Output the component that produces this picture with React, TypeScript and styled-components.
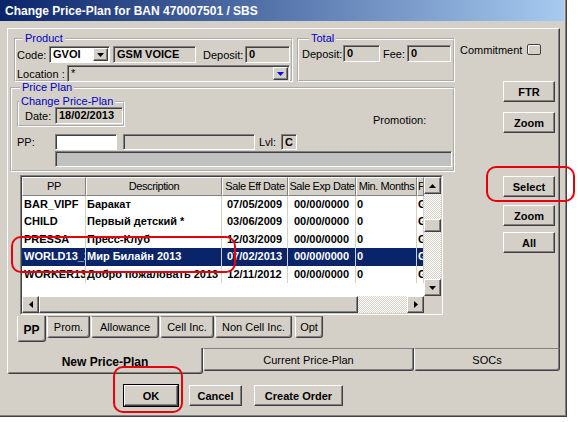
import styled, { createGlobalStyle, css } from 'styled-components'

const GlobalStyle = createGlobalStyle`
  * { box-sizing: border-box; }
  html, body { margin: 0; padding: 0; background: #fff; }
  body {
    font-family: "Liberation Sans", Arial, sans-serif;
    font-size: 11px;
    color: #000;
  }
`

const raised = css`
  border-top: 1px solid #fff;
  border-left: 1px solid #fff;
  border-right: 1px solid #404040;
  border-bottom: 1px solid #404040;
  box-shadow: inset -1px -1px 0 #808080;
`

const sunken = css`
  border-top: 1px solid #808080;
  border-left: 1px solid #808080;
  border-right: 1px solid #fff;
  border-bottom: 1px solid #fff;
  box-shadow: inset 1px 1px 0 #404040;
`

const Screen = styled.div`
  position: relative;
  width: 578px;
  height: 422px;
  overflow: hidden;
  background: #fff;
`

const Window = styled.div`
  width: 567px;
  height: 417px;
  background: #d4d0c8;
  border-right: 1px solid #404040;
  border-bottom: 1px solid #404040;
  box-shadow: inset -1px -1px 0 #808080;
  display: flex;
  flex-direction: column;
`

const TitleBar = styled.div`
  height: 21px;
  margin-right: 2px;
  flex-shrink: 0;
  background: linear-gradient(90deg, #0a246a 0%, #a6caf0 100%);
  color: #fff;
  font-weight: 700;
  font-size: 12px;
  display: flex;
  align-items: center;
  padding-left: 5px;
`

const Body = styled.div`
  display: flex;
  flex-direction: column;
  padding: 7px 0 0 7px;
`

const Page = styled.div`
  width: 553px;
  height: 320px;
  display: flex;
  border-top: 1px solid #fff;
  border-left: 1px solid #fff;
  border-right: 1px solid #404040;
  box-shadow: inset -1px 0 0 #808080;
`

const LeftCol = styled.div`
  margin-left: 2px;
  width: 445px;
  display: flex;
  flex-direction: column;
`

const RightCol = styled.div`
  margin-left: 3px;
  width: 98px;
  display: flex;
  flex-direction: column;
`

const TopRow = styled.div`
  display: flex;
  margin-top: 3px;
`

const Group = styled.fieldset<{ $w: number; $h: number; $ml?: number; $mt?: number }>`
  margin: ${p => p.$mt ?? 0}px 0 0 ${p => p.$ml ?? 0}px;
  padding: 0;
  min-width: 0;
  width: ${p => p.$w}px;
  height: ${p => p.$h}px;
  border: 2px groove #fff;
  flex-shrink: 0;
`

const Legend = styled.legend<{ $ml?: number }>`
  margin-left: ${p => p.$ml ?? 0}px;
  padding: 0 2px;
  color: #0000c0;
  font-size: 11px;
  line-height: 13px;
`

const FieldRow = styled.div<{ $mt?: number; $pl?: number; $h?: number }>`
  display: flex;
  align-items: center;
  height: ${p => p.$h ?? 17}px;
  margin-top: ${p => p.$mt ?? 0}px;
  padding-left: ${p => p.$pl ?? 0}px;
`

const Label = styled.span<{ $w?: number; $ml?: number }>`
  flex-shrink: 0;
  white-space: nowrap;
  ${p => p.$w !== undefined && `width: ${p.$w}px;`}
  margin-left: ${p => p.$ml ?? 0}px;
`

const Field = styled.div<{ $w: number; $ml?: number; $tone?: 'white' | 'gray' | 'dark'; $bold?: boolean; $h?: number }>`
  flex-shrink: 0;
  width: ${p => p.$w}px;
  height: ${p => p.$h ?? 17}px;
  margin-left: ${p => p.$ml ?? 0}px;
  background: ${p => (p.$tone === 'white' ? '#fff' : p.$tone === 'dark' ? '#c0c0c0' : '#d4d0c8')};
  ${sunken}
  font-weight: ${p => (p.$bold ? 700 : 400)};
  padding: 0 2px 0 3px;
  line-height: 15px;
  overflow: hidden;
  white-space: nowrap;
`

const DropField = styled(Field)`
  display: flex;
  align-items: center;
  justify-content: space-between;
  padding-right: 1px;
`

const DropBtn = styled.div`
  width: 15px;
  height: 13px;
  background: #d4d0c8;
  ${raised}
  display: flex;
  align-items: center;
  justify-content: center;
  flex-shrink: 0;
`

const Promotion = styled.span`
  margin-left: 248px;
  align-self: flex-end;
  line-height: 13px;
`

const Commit = styled.div`
  display: flex;
  align-items: center;
  height: 13px;
  margin-top: 14px;
  padding-left: 2px;
`

const CheckBox = styled.div`
  width: 14px;
  height: 11px;
  margin-left: 9px;
  border: 1px solid #404040;
  border-radius: 2px;
  background: #d4d0c8;
  box-shadow: inset 1px 1px 0 #fff;
`

const Button = styled.div<{ $w?: number; $mt?: number; $ml?: number; $default?: boolean }>`
  flex-shrink: 0;
  width: ${p => p.$w ?? 52}px;
  height: 21px;
  margin-top: ${p => p.$mt ?? 0}px;
  margin-left: ${p => p.$ml ?? 45}px;
  background: #d4d0c8;
  ${raised}
  ${p => p.$default && `outline: 1px solid #000;`}
  display: flex;
  align-items: center;
  justify-content: center;
  font-weight: 700;
  font-size: 11px;
`

const GridFrame = styled.div`
  margin: 3px 0 0 10px;
  width: 423px;
  height: 140px;
  border-top: 1px solid #808080;
  border-left: 1px solid #808080;
  border-right: 1px solid #fff;
  border-bottom: 1px solid #fff;
`

const Grid = styled.div`
  width: 100%;
  height: 100%;
  border-top: 1px solid #404040;
  border-left: 1px solid #404040;
  border-right: 1px solid #d4d0c8;
  border-bottom: 1px solid #d4d0c8;
  display: flex;
  flex-direction: column;
  background: #fff;
`

const GridMain = styled.div`
  display: flex;
  height: 119px;
`

const Table = styled.div`
  width: 402px;
  display: flex;
  flex-direction: column;
  overflow: hidden;
`

const HeadRow = styled.div`
  display: flex;
  height: 19px;
  flex-shrink: 0;
`

const HeadCell = styled.div<{ $w: number; $align: string }>`
  width: ${p => p.$w}px;
  flex-shrink: 0;
  background: #d4d0c8;
  border-top: 1px solid #fff;
  border-left: 1px solid #fff;
  border-right: 1px solid #808080;
  border-bottom: 1px solid #808080;
  text-align: ${p => p.$align};
  line-height: 17px;
  letter-spacing: -0.4px;
  white-space: nowrap;
  overflow: hidden;
  padding: 0;
`

const Row = styled.div<{ $sel?: boolean }>`
  display: flex;
  height: 17.4px;
  flex-shrink: 0;
  background: ${p => (p.$sel ? '#0a246a' : '#fff')};
  color: ${p => (p.$sel ? '#fff' : '#000')};
  font-weight: 700;
`

const Cell = styled.div<{ $w: number; $align: string; $pl: number }>`
  width: ${p => p.$w}px;
  flex-shrink: 0;
  text-align: ${p => p.$align};
  padding: 0 1px 0 ${p => p.$pl}px;
  border-right: 1px solid #d4d0c8;
  line-height: 17px;
  white-space: nowrap;
  overflow: hidden;
`

const dither = css`
  background-color: #fff;
  background-image: conic-gradient(#d4d0c8 25%, #fff 0 50%, #d4d0c8 0 75%, #fff 0);
  background-size: 2px 2px;
`

const VScroll = styled.div`
  width: 17px;
  display: flex;
  flex-direction: column;
  ${dither}
`

const HScroll = styled.div`
  display: flex;
  height: 17px;
`

const HTrack = styled.div`
  display: flex;
  width: 402px;
  ${dither}
`

const ScrollBtn = styled.div`
  width: 17px;
  height: 17px;
  flex-shrink: 0;
  background: #d4d0c8;
  ${raised}
  display: flex;
  align-items: center;
  justify-content: center;
`

const Thumb = styled.div<{ $w: number; $h: number; $mt?: number }>`
  width: ${p => p.$w}px;
  height: ${p => p.$h}px;
  margin-top: ${p => p.$mt ?? 0}px;
  flex-shrink: 0;
  background: #d4d0c8;
  ${raised}
`

const VSpacer = styled.div`
  flex: 1;
`

const Corner = styled.div`
  width: 17px;
  height: 17px;
  background: #d4d0c8;
`

const SubTabs = styled.div`
  display: flex;
  align-items: flex-start;
  margin: 1px 0 0 7px;
`

const SubTab = styled.div<{ $w: number; $active?: boolean; $ml?: number }>`
  width: ${p => p.$w}px;
  height: ${p => (p.$active ? 26 : 22)}px;
  margin-left: ${p => p.$ml ?? 1}px;
  background: #d4d0c8;
  border-top: ${p => (p.$active ? 'none' : '1px solid #808080')};
  border-left: 1px solid #fff;
  border-right: 1px solid #404040;
  border-bottom: 1px solid #404040;
  box-shadow: inset -1px -1px 0 #808080;
  border-radius: 0 0 3px 3px;
  display: flex;
  align-items: center;
  justify-content: center;
  font-weight: ${p => (p.$active ? 700 : 400)};
  font-size: ${p => (p.$active ? 12 : 11)}px;
  padding-top: ${p => (p.$active ? 3 : 0)}px;
`

const MainTabs = styled.div`
  display: flex;
  align-items: flex-start;
`

const MainTab = styled.div<{ $w: number; $active?: boolean }>`
  width: ${p => p.$w}px;
  height: ${p => (p.$active ? 26 : 23)}px;
  background: #d4d0c8;
  border-top: ${p => (p.$active ? 'none' : '1px solid #808080')};
  border-left: 1px solid #fff;
  border-right: 1px solid #404040;
  border-bottom: 1px solid #404040;
  box-shadow: inset -1px -1px 0 #808080;
  border-radius: 0 0 3px 3px;
  display: flex;
  align-items: center;
  justify-content: center;
  font-weight: ${p => (p.$active ? 700 : 400)};
  font-size: ${p => (p.$active ? 12 : 11)}px;
  padding-top: ${p => (p.$active ? 3 : 0)}px;
`

const ButtonRow = styled.div`
  display: flex;
  margin-top: 11px;
`

const Mark = styled.div<{ $x: number; $y: number; $w: number; $h: number }>`
  position: absolute;
  left: ${p => p.$x}px;
  top: ${p => p.$y}px;
  width: ${p => p.$w}px;
  height: ${p => p.$h}px;
  border: 2px solid #e8000b;
  border-radius: 10px;
  pointer-events: none;
`

const Arrow = ({ dir, color = '#000' }: { dir: 'up' | 'down' | 'left' | 'right'; color?: string }) => {
  const vertical = dir === 'up' || dir === 'down'
  const pts = {
    up: '0,4 3.5,0 7,4',
    down: '0,0 7,0 3.5,4',
    left: '4,0 4,7 0,3.5',
    right: '0,0 0,7 4,3.5',
  }[dir]
  return (
    <svg width={vertical ? 7 : 4} height={vertical ? 4 : 7} viewBox={vertical ? '0 0 7 4' : '0 0 4 7'}>
      <polygon points={pts} fill={color} />
    </svg>
  )
}

const columns = [
  { title: 'PP', w: 64, head: 'center', align: 'left', pl: 2 },
  { title: 'Description', w: 136, head: 'center', align: 'left', pl: 1 },
  { title: 'Sale Eff Date', w: 66, head: 'center', align: 'center', pl: 1 },
  { title: 'Sale Exp Date', w: 68, head: 'center', align: 'center', pl: 1 },
  { title: 'Min. Months', w: 61, head: 'center', align: 'left', pl: 1 },
  { title: 'P', w: 7, head: 'left', align: 'left', pl: 1 },
]

const rows = [
  ['BAR_VIPF', 'Баракат', '07/05/2009', '00/00/0000', '0', 'G'],
  ['CHILD', 'Первый детский *', '03/06/2009', '00/00/0000', '0', 'G'],
  ['PRESSA', 'Пресс-Клуб', '12/03/2009', '00/00/0000', '0', 'G'],
  ['WORLD13_2', 'Мир Билайн 2013', '07/02/2013', '00/00/0000', '0', 'G'],
  ['WORKER13', 'Добро пожаловать 2013', '12/11/2012', '00/00/0000', '0', 'G'],
]

const subTabs = [
  { label: 'PP', w: 29, active: true, ml: 0 },
  { label: 'Prom.', w: 43 },
  { label: 'Allowance', w: 68 },
  { label: 'Cell Inc.', w: 54 },
  { label: 'Non Cell Inc.', w: 77 },
  { label: 'Opt', w: 28, ml: 3 },
]

export default function App() {
  return (
    <>
      <GlobalStyle />
      <Screen>
        <Window>
          <TitleBar>Change Price-Plan for BAN 470007501 / SBS</TitleBar>
          <Body>
            <Page>
              <LeftCol>
                <TopRow>
                  <Group $w={279} $h={50} $ml={4}>
                    <Legend $ml={7}>Product</Legend>
                    <FieldRow $mt={1} $pl={1}>
                      <Label $w={32}>Code:</Label>
                      <DropField $w={61} $tone="white" $bold>
                        GVOI
                        <DropBtn><Arrow dir="down" /></DropBtn>
                      </DropField>
                      <Field $w={83} $ml={3} $bold>GSM VOICE</Field>
                      <Label $w={42} $ml={7}>Deposit:</Label>
                      <Field $w={45} $bold>0</Field>
                    </FieldRow>
                    <FieldRow $mt={2} $pl={1}>
                      <Label $w={50}>Location :</Label>
                      <DropField $w={223}>
                        *
                        <DropBtn><Arrow dir="down" color="#0000ff" /></DropBtn>
                      </DropField>
                    </FieldRow>
                  </Group>
                  <Group $w={158} $h={50} $ml={4}>
                    <Legend $ml={10}>Total</Legend>
                    <FieldRow $pl={3}>
                      <Label $w={41}>Deposit:</Label>
                      <Field $w={37} $bold>0</Field>
                      <Label $w={24} $ml={3}>Fee:</Label>
                      <Field $w={44} $bold>0</Field>
                    </FieldRow>
                  </Group>
                </TopRow>

                <Group $w={445} $h={91} $mt={-1}>
                  <Legend $ml={8}>Price Plan</Legend>
                  <FieldRow $h={32} $mt={1}>
                    <Group $w={108} $h={32} $ml={5}>
                      <Legend>Change Price-Plan</Legend>
                      <FieldRow $mt={-1} $pl={6}>
                        <Label $w={30}>Date:</Label>
                        <Field $w={68} $bold>18/02/2013</Field>
                      </FieldRow>
                    </Group>
                    <Promotion>Promotion:</Promotion>
                  </FieldRow>
                  <FieldRow $mt={7} $pl={5} $h={16}>
                    <Label $w={38}>PP:</Label>
                    <Field $w={62} $h={16} $tone="white" />
                    <Field $w={132} $h={16} $ml={6} />
                    <Label $w={22} $ml={4}>Lvl:</Label>
                    <Field $w={16} $h={16} $bold>C</Field>
                  </FieldRow>
                  <FieldRow $mt={1} $pl={43} $h={16}>
                    <Field $w={397} $h={16} $tone="dark" />
                  </FieldRow>
                </Group>

                <GridFrame>
                  <Grid>
                    <GridMain>
                      <Table>
                        <HeadRow>
                          {columns.map(c => (
                            <HeadCell key={c.title} $w={c.w} $align={c.head}>{c.title}</HeadCell>
                          ))}
                        </HeadRow>
                        {rows.map((r, i) => (
                          <Row key={r[0]} $sel={i === 3}>
                            {r.map((v, j) => (
                              <Cell key={j} $w={columns[j].w} $align={columns[j].align} $pl={columns[j].pl}>{v}</Cell>
                            ))}
                          </Row>
                        ))}
                      </Table>
                      <VScroll>
                        <ScrollBtn><Arrow dir="up" /></ScrollBtn>
                        <Thumb $w={17} $h={13} $mt={25} />
                        <VSpacer />
                        <ScrollBtn><Arrow dir="down" /></ScrollBtn>
                      </VScroll>
                    </GridMain>
                    <HScroll>
                      <HTrack>
                        <ScrollBtn><Arrow dir="left" /></ScrollBtn>
                        <Thumb $w={319} $h={17} />
                        <VSpacer />
                        <ScrollBtn><Arrow dir="right" /></ScrollBtn>
                      </HTrack>
                      <Corner />
                    </HScroll>
                  </Grid>
                </GridFrame>

                <SubTabs>
                  {subTabs.map(t => (
                    <SubTab key={t.label} $w={t.w} $active={t.active} $ml={t.ml}>{t.label}</SubTab>
                  ))}
                </SubTabs>
              </LeftCol>

              <RightCol>
                <Commit>
                  <Label $w={58}>Commitment</Label>
                  <CheckBox />
                </Commit>
                <Button $mt={25}>FTR</Button>
                <Button $mt={10}>Zoom</Button>
                <Button $mt={43}>Select</Button>
                <Button $mt={8}>Zoom</Button>
                <Button $mt={6}>All</Button>
              </RightCol>
            </Page>

            <MainTabs>
              <MainTab $w={196} $active>New Price-Plan</MainTab>
              <MainTab $w={211}>Current Price-Plan</MainTab>
              <MainTab $w={146}>SOCs</MainTab>
            </MainTabs>

            <ButtonRow>
              <Button $ml={117} $w={54} $default>OK</Button>
              <Button $ml={11} $w={53}>Cancel</Button>
              <Button $ml={12} $w={89}>Create Order</Button>
            </ButtonRow>
          </Body>
        </Window>

        <Mark $x={486} $y={166} $w={89} $h={36} />
        <Mark $x={11} $y={236} $w={225} $h={37} />
        <Mark $x={113} $y={366} $w={70} $h={47} />
      </Screen>
    </>
  )
}
